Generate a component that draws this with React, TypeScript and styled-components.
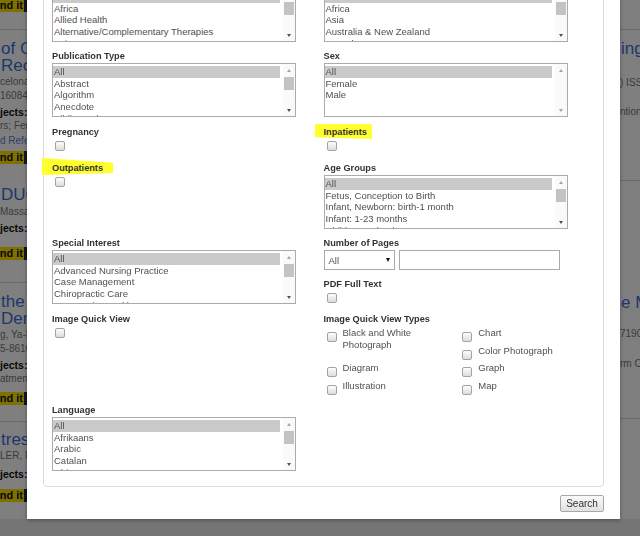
import React from 'react'
import styled, { createGlobalStyle, css } from 'styled-components'

const GlobalStyle = createGlobalStyle`
  html, body {
    margin: 0;
    padding: 0;
    width: 640px;
    height: 536px;
    overflow: hidden;
  }
  body {
    font-family: 'Liberation Sans', Arial, sans-serif;
    background: #fff;
  }
`

/* ---------- page behind the dialog ---------- */

const Page = styled.div`
  width: 640px;
  height: 536px;
  display: flex;
  flex-direction: column;
  background: #fff;
`

const PageBody = styled.div`
  display: flex;
  height: 519px;
  flex-shrink: 0;
`

const LeftStrip = styled.div`
  width: 60px;
  overflow: hidden;
  display: flex;
  flex-direction: column;
`

const Middle = styled.div`
  flex: 1;
`

const RightStrip = styled.div`
  width: 20px;
  overflow: hidden;
  display: flex;
  flex-direction: column;
`

const PageFooter = styled.div`
  flex: 1;
  background: #ebebeb;
`

const Rule = styled.div<{ $gap?: number }>`
  flex-shrink: 0;
  height: 1px;
  margin-top: ${p => p.$gap ?? 0}px;
  background: #d6d6d6;
`

const StripTitle = styled.div<{ $gap?: number }>`
  margin-top: ${p => p.$gap ?? 0}px;
  padding-left: 1px;
  font-size: 17px;
  line-height: 17px;
  color: #3a6fd8;
  white-space: nowrap;
`

const StripMeta = styled.div<{ $gap?: number }>`
  margin-top: ${p => p.$gap ?? 0}px;
  font-size: 10px;
  line-height: 14px;
  color: #777;
  white-space: nowrap;
`

const StripSubjects = styled.div<{ $gap?: number; $bold?: boolean; $link?: boolean }>`
  margin-top: ${p => p.$gap ?? 0}px;
  font-size: ${p => (p.$bold ? 10.5 : 10)}px;
  font-weight: ${p => (p.$bold ? 'bold' : 'normal')};
  line-height: 13px;
  color: ${p => (p.$bold ? '#111' : p.$link ? '#5a84cc' : '#777')};
  white-space: nowrap;
`

const FindIt = styled.div<{ $gap?: number }>`
  display: flex;
  flex-shrink: 0;
  height: 13px;
  margin-top: ${p => p.$gap ?? 0}px;
  margin-left: -13px;
`

const FindText = styled.span`
  background: #ffe000;
  color: #111;
  font-size: 11px;
  font-weight: bold;
  line-height: 13px;
  padding: 0 1px 0 3px;
`

const FindIcon = styled.span`
  width: 14px;
  background: #1b2f4e;
  display: flex;
  align-items: center;
  justify-content: center;

  &::after {
    content: '';
    width: 7px;
    height: 7px;
    border: 1.5px solid #fff;
    border-radius: 50%;
  }
`

const Overlay = styled.div`
  position: fixed;
  inset: 0;
  background: rgba(0, 0, 0, 0.5);
`

/* ---------- dialog ---------- */

const Modal = styled.div`
  position: fixed;
  left: 27px;
  bottom: 17px;
  width: 593px;
  box-sizing: border-box;
  padding: 0 16px 7px;
  background: #fff;
  box-shadow: 0 1px 4px rgba(0, 0, 0, 0.35);
`

const FilterBox = styled.div`
  border: 1px solid #dcdcdc;
  border-radius: 4px;
  padding: 8px 8px 15px;
`

const Row = styled.div<{ $gap?: number }>`
  display: grid;
  grid-template-columns: 1fr 1fr;
  align-items: start;
  margin-bottom: ${p => p.$gap ?? 0}px;
`

const Column = styled.div`
  display: flex;
  flex-direction: column;
`

const Field = styled.div<{ $gap?: number }>`
  display: flex;
  flex-direction: column;
  margin-bottom: ${p => p.$gap ?? 0}px;
`

const Label = styled.div`
  height: 13px;
  font-size: 9.2px;
  font-weight: bold;
  line-height: 13px;
  color: #333;
  white-space: nowrap;
`

const Marker = styled.span<{ $shape: 'slant' | 'flat' }>`
  display: inline-block;
  background: #ffff2e;
  ${p =>
    p.$shape === 'slant'
      ? css`
          margin: -4px -10px 0;
          padding: 4px 10px 0;
          clip-path: polygon(0 0, 100% 28%, 100% 88%, 0 100%);
        `
      : css`
          margin: -2px -5px 0 -9px;
          padding: 2px 5px 0 9px;
          clip-path: polygon(0 0, 100% 0, 100% 100%, 0 88%);
        `}
`

const ListBox = styled.div`
  width: 244px;
  height: 54px;
  box-sizing: border-box;
  border: 1px solid #ababab;
  display: flex;
  background: #fff;
`

const Options = styled.div`
  flex: 1;
  overflow: hidden;
  padding: 2px 3px 0 0;
`

const Option = styled.div<{ $selected?: boolean }>`
  height: 11.7px;
  padding-left: 1px;
  font-size: 9.5px;
  line-height: 11.7px;
  color: #505050;
  white-space: nowrap;
  background: ${p => (p.$selected ? '#cacaca' : 'transparent')};
`

const ScrollBar = styled.div`
  width: 12px;
  display: flex;
  flex-direction: column;
  background: #fafafa;
`

const Arrow = styled.div<{ $dir: 'up' | 'down'; $active?: boolean }>`
  height: 12px;
  flex-shrink: 0;
  display: flex;
  align-items: center;
  justify-content: center;

  &::after {
    content: '';
    width: 0;
    height: 0;
    border-left: 2.5px solid transparent;
    border-right: 2.5px solid transparent;
    ${p =>
      p.$dir === 'up'
        ? css`border-bottom: 3px solid ${p.$active ? '#505050' : '#a6a6a6'};`
        : css`border-top: 3px solid ${p.$active ? '#505050' : '#a6a6a6'};`}
  }
`

const Track = styled.div`
  flex: 1;
  padding: 1px 1px 0;
`

const Thumb = styled.div`
  height: 13px;
  background: #c3c3c3;
`

const CheckRow = styled.div`
  height: 14px;
  box-sizing: border-box;
  padding: 2px 0 0 3px;
`

const CheckBox = styled.span`
  display: block;
  flex-shrink: 0;
  width: 10px;
  height: 10px;
  box-sizing: border-box;
  border: 1px solid #a3a3a3;
  border-radius: 2px;
  background: linear-gradient(#fdfdfd, #dcdcdc);
`

const PagesRow = styled.div`
  display: flex;
  gap: 4px;
`

const SelectBox = styled.div`
  width: 71px;
  height: 20px;
  box-sizing: border-box;
  border: 1px solid #a9a9a9;
  padding: 0 4px;
  display: flex;
  align-items: center;
  justify-content: space-between;
  font-size: 9.5px;
  color: #505050;
  background: #fff;
`

const SelectArrow = styled.span`
  width: 0;
  height: 0;
  border-left: 2.5px solid transparent;
  border-right: 2.5px solid transparent;
  border-top: 4px solid #111;
`

const TextInput = styled.div`
  width: 161px;
  height: 20px;
  box-sizing: border-box;
  border: 1px solid #a9a9a9;
  background: #fff;
`

const TypeGrid = styled.div`
  display: grid;
  grid-template-columns: 1fr 1fr;
  grid-auto-rows: 17.5px;
  margin-top: 1px;
`

const TypeItem = styled.div<{ $tall?: boolean }>`
  display: flex;
  align-items: flex-start;
  grid-row: span ${p => (p.$tall ? 2 : 1)};

  ${CheckBox} {
    margin: 5px 0 0 3px;
  }
`

const TypeText = styled.span`
  margin-left: 6px;
  padding-right: 6px;
  font-size: 9.5px;
  line-height: 12px;
  color: #505050;
`

const ModalFooter = styled.div`
  display: flex;
  justify-content: flex-end;
  margin-top: 8px;
`

const SearchButton = styled.button`
  width: 44px;
  height: 17px;
  padding: 0;
  font-family: 'Liberation Sans', Arial, sans-serif;
  font-size: 10px;
  color: #333;
  border: 1px solid #a8a8a8;
  border-radius: 2px;
  background: linear-gradient(#fafafa, #e1e1e1);
`

/* ---------- data ---------- */

const journalSubset = ['All', 'Africa', 'Allied Health', 'Alternative/Complementary Therapies', 'Asia', 'Australia & New Zealand']
const geographic = ['All', 'Africa', 'Asia', 'Australia & New Zealand', 'Canada', 'Continental Europe']
const publicationType = ['All', 'Abstract', 'Algorithm', 'Anecdote', 'Bibliography', 'Biography']
const sex = ['All', 'Female', 'Male']
const ageGroups = [
  'All',
  'Fetus, Conception to Birth',
  'Infant, Newborn: birth-1 month',
  'Infant: 1-23 months',
  'Child, Preschool: 2-5 years',
  'Child: 6-12 years',
]
const specialInterest = ['All', 'Advanced Nursing Practice', 'Case Management', 'Chiropractic Care', 'Community Health', 'Critical Care']
const language = ['All', 'Afrikaans', 'Arabic', 'Catalan', 'Chinese', 'Croatian']

const imageTypes = [
  { name: 'Black and White Photograph', tall: true },
  { name: 'Chart' },
  { name: 'Color Photograph' },
  { name: 'Diagram' },
  { name: 'Graph' },
  { name: 'Illustration' },
  { name: 'Map' },
]

interface ListFieldProps {
  label: string
  options: string[]
  scrollable?: boolean
  gap?: number
}

const ListField = ({ label, options, scrollable = true, gap }: ListFieldProps) => (
  <Field $gap={gap}>
    <Label>{label}</Label>
    <ListBox>
      <Options>
        {options.map((o, i) => (
          <Option key={o} $selected={i === 0}>
            {o}
          </Option>
        ))}
      </Options>
      <ScrollBar>
        <Arrow $dir='up' />
        <Track>{scrollable && <Thumb />}</Track>
        <Arrow $dir='down' $active={scrollable} />
      </ScrollBar>
    </ListBox>
  </Field>
)

const CheckField = ({ label, gap }: { label: React.ReactNode; gap?: number }) => (
  <Field $gap={gap}>
    <Label>{label}</Label>
    <CheckRow>
      <CheckBox />
    </CheckRow>
  </Field>
)

const Find = ({ gap }: { gap?: number }) => (
  <FindIt $gap={gap}>
    <FindText>Find it</FindText>
    <FindIcon />
  </FindIt>
)

export default function App() {
  return (
    <>
      <GlobalStyle />
      <Page>
        <PageBody>
          <LeftStrip>
            <Find gap={-1} />
            <Rule $gap={17} />
            <StripTitle $gap={9.5}>of Chronic Pain</StripTitle>
            <StripTitle>Recovery</StripTitle>
            <StripMeta $gap={1.5}>celona, Spain</StripMeta>
            <StripMeta>16084</StripMeta>
            <StripSubjects $gap={3} $bold>jects: Pain</StripSubjects>
            <StripSubjects>rs; Female</StripSubjects>
            <StripSubjects $gap={2} $link>d References</StripSubjects>
            <Find gap={3.5} />
            <StripTitle $gap={22.5}>DUCTION</StripTitle>
            <StripMeta $gap={1.5}>Massage</StripMeta>
            <StripSubjects $gap={3.5} $bold>jects: Massage</StripSubjects>
            <Find gap={11.5} />
            <Rule $gap={22} />
            <StripTitle $gap={10.5}>the Effects</StripTitle>
            <StripTitle>Dementia</StripTitle>
            <StripMeta $gap={0.5}>g, Ya-Fen</StripMeta>
            <StripMeta>5-8610</StripMeta>
            <StripSubjects $gap={3.5} $bold>jects: Aged</StripSubjects>
            <StripSubjects>atment</StripSubjects>
            <Find gap={6.5} />
            <Rule $gap={16} />
            <StripTitle $gap={9.5}>tress</StripTitle>
            <StripMeta $gap={0.5}>LER, Mary</StripMeta>
            <StripSubjects $gap={5.5} $bold>jects: Stress</StripSubjects>
            <Find gap={7.5} />
          </LeftStrip>
          <Middle />
          <RightStrip>
            <Rule $gap={29} />
            <StripTitle $gap={9.5}>ing Care</StripTitle>
            <StripMeta $gap={19.5}>) ISSN</StripMeta>
            <StripMeta $gap={15}>ntion</StripMeta>
            <Rule $gap={61} />
            <StripTitle $gap={112.5}>e Mind</StripTitle>
            <StripMeta $gap={16.5}>7190</StripMeta>
            <StripMeta $gap={16}>rm Care</StripMeta>
            <Rule $gap={47} />
          </RightStrip>
        </PageBody>
        <PageFooter />
      </Page>
      <Overlay />
      <Modal>
        <FilterBox>
          <Row $gap={8}>
            <ListField label='Journal Subset' options={journalSubset} />
            <ListField label='Geographic Subset' options={geographic} />
          </Row>
          <Row $gap={9}>
            <ListField label='Publication Type' options={publicationType} />
            <ListField label='Sex' options={sex} scrollable={false} />
          </Row>
          <Row $gap={9}>
            <CheckField label='Pregnancy' />
            <CheckField label={<Marker $shape='flat'>Inpatients</Marker>} />
          </Row>
          <Row $gap={8}>
            <CheckField label={<Marker $shape='slant'>Outpatients</Marker>} />
            <ListField label='Age Groups' options={ageGroups} />
          </Row>
          <Row $gap={7}>
            <Column>
              <ListField label='Special Interest' options={specialInterest} gap={9} />
              <CheckField label='Image Quick View' />
            </Column>
            <Column>
              <Field $gap={8}>
                <Label>Number of Pages</Label>
                <PagesRow>
                  <SelectBox>
                    All
                    <SelectArrow />
                  </SelectBox>
                  <TextInput />
                </PagesRow>
              </Field>
              <CheckField label='PDF Full Text' gap={8} />
              <Field>
                <Label>Image Quick View Types</Label>
                <TypeGrid>
                  {imageTypes.map(t => (
                    <TypeItem key={t.name} $tall={t.tall}>
                      <CheckBox />
                      <TypeText>{t.name}</TypeText>
                    </TypeItem>
                  ))}
                </TypeGrid>
              </Field>
            </Column>
          </Row>
          <Row>
            <ListField label='Language' options={language} />
          </Row>
        </FilterBox>
        <ModalFooter>
          <SearchButton>Search</SearchButton>
        </ModalFooter>
      </Modal>
    </>
  )
}
